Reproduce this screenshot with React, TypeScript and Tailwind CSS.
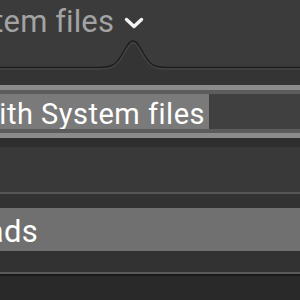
export default function App() {
  const font = { fontFamily: 'Roboto, "Noto Sans", sans-serif' };
  return (
    <div className="w-[300px] h-[300px] overflow-hidden relative bg-[#3a3a3a]" style={font}>
      {/* toolbar */}
      <div className="h-[67px] bg-[#3b3b3b] flex items-start pt-[4px]">
        <div className="w-[114px] flex justify-end overflow-hidden">
          <span className="whitespace-nowrap text-[31px] leading-[36px] text-[#a3a3a3] tracking-[0.1px]">Show System files</span>
        </div>
        <svg className="ml-[10px] mt-[12px]" width="20" height="14" viewBox="0 0 20 14">
          <path d="M2.5 3.5 L10 10.5 L17.5 3.5" fill="none" stroke="#f4f4f4" strokeWidth="3.4" strokeLinecap="round" strokeLinejoin="round" />
        </svg>
      </div>
      {/* popover arrow */}
      <svg className="absolute left-0 top-[36px]" width="300" height="36" viewBox="0 0 300 36">
        <path d="M-2 31.5 L98 31.5 C110 31.5 115 30 121 20 L127.5 9 C131 3.5 135 3.5 138.5 9 L145 20 C151 30 156 31.5 168 31.5 L302 31.5 L302 40 L-2 40 Z" fill="#343434" />
        <path d="M-2 31.5 L98 31.5 C110 31.5 115 30 121 20 L127.5 9 C131 3.5 135 3.5 138.5 9 L145 20 C151 30 156 31.5 168 31.5 L302 31.5" fill="none" stroke="#1e1e1e" strokeWidth="1.4" />
        <path d="M-2 33 L98 33 C110.5 33 116 31.5 122 21 L128.5 10.5 C131.5 6 134.5 6 137.5 10.5 L144 21 C150 31.5 155.5 33 168 33 L302 33" fill="none" stroke="#4c4c4c" strokeWidth="1" />
      </svg>
      {/* popover body */}
      <div className="bg-[#343434] pt-[18px]">
        {/* field with focus ring */}
        <div className="border-y-[5px] border-[#8b8b8b]">
          <div className="border-y-[4px] border-[#5c5c5c] bg-[#404040] h-[43px] flex items-center">
            <div className="w-[209px] h-[35px] bg-[#7a7a7a] flex justify-end overflow-hidden">
              <span className="whitespace-nowrap text-[29px] leading-[35px] text-white pr-[4px] pt-[3px] tracking-[0.5px]">Match with System files</span>
            </div>
          </div>
        </div>
        <div className="h-[9px] bg-[#2e2e2e]" />
      </div>
      <div className="bg-[#393939] h-[45px]" />
      <div className="h-[2px] bg-[#555555]" />
      <div className="bg-[#323232] pt-[14px] pb-[21px]">
        <div className="h-[43px] bg-[#707070] flex items-center">
          <div className="w-[38px] flex justify-end overflow-hidden">
            <span className="whitespace-nowrap text-[31px] leading-[36px] pt-[4px] text-white tracking-[0.3px]">Downloads</span>
          </div>
        </div>
      </div>
      <div className="h-[2px] bg-[#5a5a5a]" />
      <div className="h-[2px] bg-[#1a1a1a]" />
      <div className="h-[40px] bg-[#292929]" />
    </div>
  );
}
